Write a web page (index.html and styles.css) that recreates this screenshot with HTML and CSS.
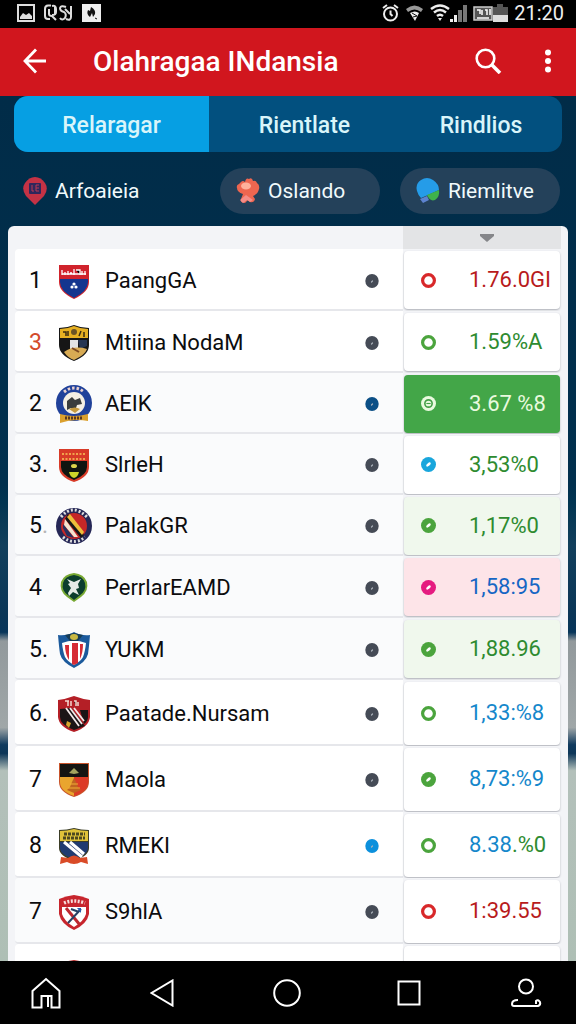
FILE: index.html
```
<!DOCTYPE html>
<html lang="id">
<head>
    <meta charset="UTF-8">
    <meta name="viewport" content="width=device-width, initial-scale=1.0">
    <title>Olahragaa INdansia</title>
    <link rel="stylesheet" href="styles.css">
</head>
<body>
    <!-- Shared status dots -->
    <svg width="0" height="0" class="defs" aria-hidden="true">
        <symbol id="dot" viewBox="0 0 14 14"><ellipse cx="7" cy="7" rx="6.700" ry="7" fill="currentColor"/><path d="M6.500 8l1-1" stroke="#aab1ba" stroke-width="1.200" stroke-linecap="round"/></symbol>
        <symbol id="ring" viewBox="0 0 14 14"><circle cx="7" cy="7" r="5.500" fill="#fff" stroke="currentColor" stroke-width="3"/></symbol>
        <symbol id="disc" viewBox="0 0 14 14"><circle cx="7" cy="7" r="7" fill="currentColor"/><ellipse cx="7" cy="7" rx="2.600" ry="1.300" fill="#fff" transform="rotate(-40 7 7)"/></symbol>
        <symbol id="target" viewBox="0 0 14 14"><circle cx="7" cy="7" r="7" fill="currentColor"/><circle cx="7" cy="7" r="3.400" fill="none" stroke="#43a047" stroke-width="1.500"/><path d="M5 7h4" stroke="#43a047"/></symbol>
    </svg>

    <div class="status-bar">
        <div class="status-group">
            <svg width="18" height="18" viewBox="0 0 18 18"><rect x="1" y="1" width="16" height="16" fill="none" stroke="#ddd" stroke-width="2"/><path d="M3 15v-2l3-4 3 2 3-2 3 3v3z" fill="#ddd"/></svg>
            <svg width="29" height="18" viewBox="0 0 29 18" fill="none" stroke="#ddd" stroke-width="2"><path d="M7 1.500H4Q1 1.500 1 5v7q0 3 3 3h2M11 2v8M5 5v5q0 2 3 2l4 4M8 2q4-1 4 3v3q0 3-4 3M22 3q-5-2-6 1 0 3 4 4 3 2 1 6-3 3-5 0M27 2v11q0 4-5 2M21 5l5 5"/></svg>
            <svg width="19" height="18" viewBox="0 0 19 18"><path fill="#eee" d="M0 0h19v18H0z"/><path d="M9 3q5 3 4 7l-2 3-1-4-2 4q-4-3-2-7l2 1z" fill="#111"/><path d="M13 14l2 1" stroke="#111"/></svg>
        </div>
        <div class="status-group right">
            <svg width="17" height="18" viewBox="0 0 17 18" fill="none" stroke="#eee" stroke-width="2"><circle cx="8.500" cy="10" r="6.500"/><path d="M8.500 6.500V10l2 2M1 4l4-3M16 4l-4-3"/></svg>
            <svg width="19" height="18" viewBox="0 0 19 18"><path d="M1 5q8.500-7 17 0l-2 3q-6.500-5-13 0z" fill="#999"/><path d="M5 9q5-3 9 0l-4 8z" fill="#eee"/><path d="M7 9l5 3-4 1" stroke="#111" fill="none"/></svg>
            <svg width="20" height="18" viewBox="0 0 20 18" fill="none" stroke="#eee" stroke-width="2.500"><path d="M1 5q9-7 18 0M4 8.500q6-5 12 0M7 12q3-2.500 6 0"/><path d="M8 14h4l-2 3z" fill="#eee" stroke="none"/></svg>
            <svg class="signal" width="17" height="18" viewBox="0 0 17 18"><path d="M0 15h3v3H0zM4 11h3v7H4z" fill="#eee"/><path d="M8 6h4v12H8zM13 1h4v17h-4z" fill="#777"/></svg>
            <svg width="35" height="18" viewBox="0 0 35 18"><rect x="1" y="3" width="18" height="13" fill="#555" stroke="#ccc" stroke-width="1.500"/><path d="M4 6h3v4M9 6v5M12 6h2v5M17 5v6M4 14h12" stroke="#fff" stroke-width="1.500" fill="none"/><path d="M20 3h4V0h6v3h5v8H20z" fill="#555"/><path d="M20 11h15v7H20z" fill="#ddd"/></svg>
            <span class="clock">21:20</span>
        </div>
    </div>

    <header class="app-bar">
        <button class="icon-btn" aria-label="Kembali"><svg width="24" height="26" viewBox="0 0 24 26" fill="none" stroke="#fff" stroke-width="2.800"><path d="M13 1.500L2 13l11 11.500M2 13h21"/></svg></button>
        <h1>Olahragaa INdansia</h1>
        <button class="icon-btn" aria-label="Cari"><svg width="27" height="26" viewBox="0 0 27 26" fill="none" stroke="#fff"><circle cx="10.500" cy="10.500" r="8.800" stroke-width="2.600"/><path d="M17 17l8 8" stroke-width="3.600"/></svg></button>
        <button class="icon-btn" aria-label="Menu"><svg width="8" height="24" viewBox="0 0 8 24" fill="#fff"><circle cx="4" cy="3.500" r="3"/><circle cx="4" cy="12" r="3"/><circle cx="4" cy="20.500" r="3"/></svg></button>
    </header>

    <main class="content">
        <nav class="tabs">
            <button class="tab active">Relaragar</button>
            <button class="tab">Rientlate</button>
            <button class="tab">Rindlios</button>
        </nav>

        <div class="chips">
            <button class="chip plain">
                <svg width="24" height="28" viewBox="0 0 24 28"><path d="M12 28L3 19Q-2 12 2 6q4-6 10-6t10 6q4 6-1 13z" fill="#c43245"/><rect x="6" y="6" width="12" height="11" rx="1" fill="#30275c"/><path d="M9 8v6h2M16 8h-3v6h3M13 11h3" stroke="#b93a55" fill="none"/></svg>
                Arfoaieia
            </button>
            <button class="chip">
                <svg width="24" height="26" viewBox="0 0 24 26"><path d="M5 4q2-2 4 0 1-5 4-3 3-2 4 2 3-1 4 2 3 2 2 6-1 5-6 7l2 3q-1 4-5 3l-2-2-3 3q-5 0-4-4l2-5Q1 14 1 10q-1-3 2-4z" fill="#ee6650"/><ellipse cx="10" cy="8" rx="5" ry="3.500" fill="#ffb19b"/><path d="M4 22l6-5 7 5-3 2-3-2-4 3z" fill="#f58d88"/></svg>
                Oslando
            </button>
            <button class="chip">
                <svg width="24" height="26" viewBox="0 0 24 26"><path d="M1 13Q-1 6 5 2q6-4 12 0 6 4 6 10l-11 5-7 3q-3-3-4-7z" fill="#259ce8"/><path d="M11 17l12-5q1 7-4 10-5 2-8-5z" fill="#3fb24b"/><path d="M4 21l7-3 2 4-6 3z" fill="#5d83cf"/></svg>
                Riemlitve
            </button>
        </div>

        <section class="card">
            <div class="card-head"><button class="sort" aria-label="Urutkan"><svg width="14" height="8" viewBox="0 0 14 8"><path d="M0 0h14v2L7 8 0 2z" fill="#85868a"/></svg></button></div>
            <table class="standings">
                <tbody>
                    <tr>
                        <td class="rank">1</td>
                        <td class="crest"><svg width="36" height="38" viewBox="0 0 36 38"><path d="M3 3h30v17q0 10-15 17Q3 30 3 20z" fill="#d0232c"/><path d="M4 17h28v3q0 9-14 16Q4 29 4 20z" fill="#14368f"/><path d="M6 8v5M9 10v3M12 9v4M14 11h2M18 7v6M20 8h4v5M26 9v4M29 9v4M6 12h24" stroke="#fff" stroke-width="1.300"/><circle cx="18" cy="22" r="1.600" fill="#fff"/><circle cx="16" cy="25" r="1.600" fill="#fff"/><circle cx="20" cy="25" r="1.600" fill="#fff"/></svg></td>
                        <td class="team">PaangGA</td>
                        <td class="mark"><svg width="14" height="14"><use href="#dot"/></svg></td>
                        <td class="score"><div class="cell red"><svg width="15" height="15"><use href="#ring"/></svg><span>1.76.0GI</span></div></td>
                    </tr>
                    <tr>
                        <td class="rank hot">3</td>
                        <td class="crest"><svg width="36" height="38" viewBox="0 0 36 38"><path d="M18 1q7 3 15 3v17q0 10-15 16Q3 31 3 21V4q8 0 15-3z" fill="#161616"/><path d="M18 2q7 3 14 3v9H4V5q7 0 14-3z" fill="#e6b022"/><path d="M7 8h3v4M12 7v5M25 7l-2 5M28 8v5" stroke="#382a10" stroke-width="1.500" fill="none"/><circle cx="18" cy="8" r="3" fill="#6a5325"/><path d="M14 16h8v9h-8z" fill="#e3e3e3"/><path d="M22 16h9v6l-7 3z" fill="#263552"/><path d="M8 28q10-7 23-3-2 6-13 11-6-2-10-8z" fill="#d7aa54"/><path d="M16 24l7 4" stroke="#7b4822" stroke-width="2"/></svg></td>
                        <td class="team">Mtiina NodaM</td>
                        <td class="mark"><svg width="14" height="14"><use href="#dot"/></svg></td>
                        <td class="score"><div class="cell green"><svg width="15" height="15"><use href="#ring"/></svg><span>1.59%A</span></div></td>
                    </tr>
                    <tr class="compact alt">
                        <td class="rank">2</td>
                        <td class="crest"><svg width="36" height="38" viewBox="0 0 36 38"><circle cx="18" cy="18" r="18" fill="#20419a"/><circle cx="18" cy="18" r="11" fill="#f4efe4"/><path d="M8 7q10-8 20 0" stroke="#e8d0cf" stroke-width="3" stroke-dasharray="2.500 2" fill="none"/><path d="M11 16l5-4 3 3 5-2 2 6-5 1-2 6-4-3-4 2z" fill="#3a3d3d"/><path d="M13 24q6-3 11 0l-5 4z" fill="#c69a3e"/><path d="M4 29q14 4 28 0v7q-14-3-28 2z" fill="#dba02d"/><path d="M9 33h18" stroke="#5a3920" stroke-width="3" stroke-dasharray="2 1"/></svg></td>
                        <td class="team">AEIK</td>
                        <td class="mark navy"><svg width="14" height="14"><use href="#dot"/></svg></td>
                        <td class="score"><div class="cell solid"><svg width="15" height="15"><use href="#target"/></svg><span>3.67 %8</span></div></td>
                    </tr>
                    <tr class="compact alt">
                        <td class="rank">3.</td>
                        <td class="crest"><svg width="36" height="38" viewBox="0 0 36 38"><path d="M3 3h30v18q0 10-15 15Q3 31 3 21z" fill="#d83b28"/><path d="M5 15h26v6q0 8-13 13Q5 29 5 21z" fill="#101510"/><path d="M6 8h24M6 13h24" stroke="#f1a34c" stroke-width="2" stroke-dasharray="2 1.500"/><ellipse cx="18" cy="20" rx="3" ry="2" fill="#ddd44b"/><path d="M13 26h10q-1 5-5 6-4-1-5-6z" fill="#cdd529"/></svg></td>
                        <td class="team">SlrleH</td>
                        <td class="mark"><svg width="14" height="14"><use href="#dot"/></svg></td>
                        <td class="score"><div class="cell green sky-dot"><svg width="15" height="15"><use href="#disc"/></svg><span>3,53%0</span></div></td>
                    </tr>
                    <tr class="compact alt">
                        <td class="rank">5<span class="faint">.</span></td>
                        <td class="crest"><svg width="36" height="38" viewBox="0 0 36 38"><circle cx="18" cy="19" r="18" fill="#252756"/><path d="M5 10q12-14 26 0M7 30q11 9 22 0" fill="none" stroke="#ddd" stroke-width="3" stroke-dasharray="2 2"/><circle cx="18" cy="19" r="13" fill="#c52727"/><path d="M12 7l16 21-3 3L9 12z" fill="#171717"/><path d="M14 7l14 18-2 3L11 10z" fill="#edbd3a"/><path d="M9 12l13 18h-4L8 18z" fill="#f4e5d0"/><path d="M7 17l11 14-7-2-4-8z" fill="#26315f"/></svg></td>
                        <td class="team">PalakGR</td>
                        <td class="mark"><svg width="14" height="14"><use href="#dot"/></svg></td>
                        <td class="score"><div class="cell green mint"><svg width="15" height="15"><use href="#disc"/></svg><span>1,17%0</span></div></td>
                    </tr>
                    <tr class="alt">
                        <td class="rank">4</td>
                        <td class="crest"><svg width="36" height="38" viewBox="0 0 36 38"><path d="M18 4q10 1 13 9 2 9-6 15l-7 5-7-5Q3 22 5 13q3-8 13-9z" fill="#77a832"/><path d="M18 6q9 1 11 8 2 8-6 13l-5 4-5-4Q5 22 7 14q2-7 11-8z" fill="#0b3e2d"/><path d="M11 10l7 3 7-3-3 5 1 4-3 1 3 6-6-3-4 4-1-3 3-5-3-4 2-1z" fill="#e4ebe6"/></svg></td>
                        <td class="team">PerrlarEAMD</td>
                        <td class="mark"><svg width="14" height="14"><use href="#dot"/></svg></td>
                        <td class="score"><div class="cell blue pink"><svg width="15" height="15"><use href="#disc"/></svg><span>1,58:95</span></div></td>
                    </tr>
                    <tr class="alt">
                        <td class="rank">5.</td>
                        <td class="crest"><svg width="36" height="38" viewBox="0 0 36 38"><path d="M18 1q7 4 16 3-1 12-2 19-2 8-14 14Q6 31 4 23 3 16 2 4q9 1 16-3z" fill="#1b5a9c"/><path d="M6 12q12-5 24 0-1 9-3 14-2 4-9 8-7-4-9-8-2-5-3-14z" fill="#fff"/><path d="M9 14h4v15q-4-6-4-15zM16 12h6v20l-4 2-2-1zM24 13h3q0 9-3 15z" fill="#d52c35"/><path d="M9 4l9-2 9 2-5 6h-8z" fill="#173c55"/><ellipse cx="18" cy="6" rx="4" ry="3" fill="#c8b842"/></svg></td>
                        <td class="team">YUKM</td>
                        <td class="mark"><svg width="14" height="14"><use href="#dot"/></svg></td>
                        <td class="score"><div class="cell green mint"><svg width="15" height="15"><use href="#disc"/></svg><span>1,88.96</span></div></td>
                    </tr>
                    <tr class="tall">
                        <td class="rank">6.</td>
                        <td class="crest"><svg width="36" height="38" viewBox="0 0 36 38"><path d="M18 1q8 3 16 4v17q-1 10-16 15Q3 32 2 22V5q8-1 16-4z" fill="#b41f26"/><path d="M4 14l11-1 14 18-11 4Q4 30 4 22z" fill="#1b1516"/><path d="M24 15h8v7q0 4-4 7z" fill="#1b1516"/><path d="M10 13l13 18M14 13l12 16M18 13l10 13" stroke="#f3e9e9" stroke-width="1.800"/><path d="M9 6h4M12 6v5M15 6v5M18 6h2v5M22 7v4" stroke="#f5d8d0" stroke-width="1.500"/><path d="M11 26l4 2-2 5-3-3z" fill="#d8a52d"/></svg></td>
                        <td class="team">Paatade.Nursam</td>
                        <td class="mark"><svg width="14" height="14"><use href="#dot"/></svg></td>
                        <td class="score"><div class="cell sky green-dot"><svg width="15" height="15"><use href="#ring"/></svg><span>1,33:%8</span></div></td>
                    </tr>
                    <tr class="tall">
                        <td class="rank">7</td>
                        <td class="crest"><svg width="36" height="38" viewBox="0 0 36 38"><path d="M3 2h30v19q0 10-15 15Q3 31 3 21z" fill="#c8542b"/><path d="M4 3h28v13H4z" fill="#161512"/><path d="M4 16h14v19Q4 30 4 21z" fill="#e9a52e"/><path d="M18 16h14v5q0 9-14 14z" fill="#dc3b26"/><path d="M13 12l3-3 2-2 2 2 3 3-5 1z" fill="#a4a35e"/><path d="M14 26l2-5 2-4 2 4 2 5 3 3-7 3-7-3z" fill="#bf6420"/><path d="M14 23h8M12 27h12" stroke="#f0ac35"/></svg></td>
                        <td class="team">Maola</td>
                        <td class="mark"><svg width="14" height="14"><use href="#dot"/></svg></td>
                        <td class="score"><div class="cell sky green-dot"><svg width="15" height="15"><use href="#disc"/></svg><span>8,73:%9</span></div></td>
                    </tr>
                    <tr class="tall">
                        <td class="rank">8</td>
                        <td class="crest"><svg width="36" height="38" viewBox="0 0 36 38"><path d="M18 1q7 2 15 2v18q0 8-15 13Q3 29 3 21V3q8 0 15-2z" fill="#3b3d26"/><path d="M18 2q7 2 14 2v10H4V4q7 0 14-2z" fill="#dfc239"/><path d="M8 7h21M7 11h22" stroke="#4d4820" stroke-width="3" stroke-dasharray="3 1"/><path d="M4 15h28v7q-1 6-14 10Q5 28 4 22z" fill="#203b70"/><path d="M8 15l18 15M14 15l14 12" stroke="#fff" stroke-width="3"/><path d="M5 30l7 1q6-5 12 0l7-1 1 7-7-2q-7 4-14 0l-7 2z" fill="#d94b27"/></svg></td>
                        <td class="team">RMEKI</td>
                        <td class="mark azure"><svg width="14" height="14"><use href="#dot"/></svg></td>
                        <td class="score"><div class="cell sky green-dot"><svg width="15" height="15"><use href="#ring"/></svg><span>8.38<span class="tail">.%0</span></span></div></td>
                    </tr>
                    <tr class="tall alt">
                        <td class="rank">7</td>
                        <td class="crest"><svg width="36" height="38" viewBox="0 0 36 38"><path d="M18 2q8 1 15 4v15q-2 10-15 16Q5 31 3 21V6q7-3 15-4z" fill="#c7252d"/><path d="M6 14h24v7q-2 7-12 13Q8 28 6 21z" fill="#fff"/><path d="M8 10q10-4 21 0" stroke="#f6dcda" stroke-width="3.500" stroke-dasharray="2 1.500" fill="none"/><path d="M10 15l14 17" stroke="#bd2830" stroke-width="3"/><path d="M25 16L12 30M15 16l8 3" stroke="#284265" stroke-width="2"/><path d="M21 15h4v5z" fill="#275cac"/></svg></td>
                        <td class="team">S9hlA</td>
                        <td class="mark"><svg width="14" height="14"><use href="#dot"/></svg></td>
                        <td class="score"><div class="cell red"><svg width="15" height="15"><use href="#ring"/></svg><span>1:39.55</span></div></td>
                    </tr>
                    <tr class="tall">
                        <td class="rank"></td>
                        <td class="crest"><svg width="36" height="38" viewBox="0 0 36 38"><path d="M18 1q8 1 15 4v16q-2 10-15 16Q5 31 3 21V5q7-3 15-4z" fill="#b52a2a"/><path d="M10 4h8" stroke="#d8b75a" stroke-width="2"/></svg></td>
                        <td class="team"></td>
                        <td class="mark"></td>
                        <td class="score"><div class="cell"></div></td>
                    </tr>
                </tbody>
            </table>
        </section>
    </main>

    <footer class="nav-bar">
        <button class="icon-btn" aria-label="Beranda"><svg width="30" height="32" viewBox="0 0 30 32"><path d="M1.500 30.500V14L15 2l13.500 12v16.500h-8V19h-10v11.500zM17 20v10"/></svg></button>
        <button class="icon-btn" aria-label="Kembali"><svg width="24" height="28" viewBox="0 0 24 28"><path d="M22.500 1.500v25L1.500 14z"/></svg></button>
        <button class="icon-btn" aria-label="Tengah"><svg width="28" height="28" viewBox="0 0 28 28"><circle cx="14" cy="14" r="12.800"/></svg></button>
        <button class="icon-btn" aria-label="Terbaru"><svg width="24" height="26" viewBox="0 0 24 26"><rect x="1.500" y="1.500" width="21" height="23"/></svg></button>
        <button class="icon-btn" aria-label="Profil"><svg width="32" height="30" viewBox="0 0 32 30"><circle cx="16" cy="8.500" r="7"/><path d="M8 22q-6 0-6 4 0 2 2 2h24q3-1 2-4-2-3-4-1v3"/></svg></button>
    </footer>
</body>
</html>
```
FILE: styles.css
```
* {
    box-sizing: border-box;
}
body {
    margin: 0;
    height: 100vh;
    display: flex;
    flex-direction: column;
    font-family: Roboto, "Liberation Sans", sans-serif;
    background-color: #000;
    color: #0c0c0e;
}
button {
    border: none;
    padding: 0;
    background: none;
    font-family: inherit;
    color: inherit;
    cursor: pointer;
}
svg {
    display: block;
    flex: none;
}
h1 {
    margin: 0;
    flex: 1;
    font-size: 28px;
    font-weight: 500;
    color: #fff;
}
.defs {
    position: absolute;
}

/* Status bar */
.status-bar {
    display: flex;
    flex: none;
    justify-content: space-between;
    align-items: center;
    height: 28px;
    padding: 0 12px 2px 17px;
    background-color: #000;
}
.status-group {
    display: flex;
    align-items: center;
    gap: 9px;
}
.status-group.right {
    gap: 6px;
}
.signal {
    margin-left: -6px;
}
.clock {
    font-size: 20px;
    line-height: 24px;
    color: #eee;
}

/* App bar */
.app-bar {
    display: flex;
    flex: none;
    align-items: center;
    height: 68px;
    padding: 0 24px 2px 23px;
    background-color: #d1161e;
}
.app-bar h1 {
    padding-left: 46px;
}
.app-bar .icon-btn:last-child {
    margin-left: 42px;
}
.icon-btn {
    display: flex;
    align-items: center;
    justify-content: center;
}

.content {
    flex: 1;
    min-height: 0;
    padding: 0 8px;
    overflow: hidden auto;
    scrollbar-width: none;
    background: linear-gradient(#012c48 0, #01304e 45%, #023552 47%, #123f5c 52%, #0a3657 60%, #07355a 62%, #92999c 63%, #a0a7a8 73%, #103a5e 75%, #0d3658 76%, #b3c0ba 78%, #aebfb5 100%);
}

/* Tabs */
.tabs {
    display: grid;
    grid-template-columns: 195fr 191fr 162fr;
    height: 56px;
    margin: 0 6px 16px;
    border-radius: 14px;
    background-color: #02507f;
    overflow: hidden;
}
.tab {
    padding-top: 2px;
    font-size: 23px;
    font-weight: 500;
    color: #d9f5fa;
}
.tab.active {
    background-color: #069fe3;
}

/* Filter chips */
.chips {
    display: flex;
    gap: 20px;
    height: 46px;
    margin: 0 8px 12px 0;
}
.chip {
    display: flex;
    align-items: center;
    gap: 8px;
    width: 160px;
    padding-left: 16px;
    border-radius: 23px;
    background-color: #24415a;
    font-size: 21px;
    color: #f1fafc;
}
.chip.plain {
    flex: 1;
    padding-left: 15px;
    background-color: transparent;
}

/* Standings */
.card {
    padding: 0 7px;
    border-radius: 6px 6px 0 0;
    background-color: #f3f4f7;
}
.card-head {
    display: flex;
    justify-content: flex-end;
    height: 23px;
}
.sort {
    display: flex;
    align-items: center;
    justify-content: center;
    width: 158px;
    padding-left: 10px;
    background-color: #e3e4e6;
}
.standings {
    width: 100%;
    table-layout: fixed;
    border-spacing: 0;
    font-size: 22px;
    line-height: 28px;
}
.standings tr {
    height: 62px;
}
.standings .compact {
    height: 61px;
}
.standings .tall {
    height: 66px;
}
.standings td {
    padding: 3px 0 0;
    border-bottom: 2px solid #e6e7eb;
    background-color: #fff;
}
.standings .alt td {
    background-color: #fafbfc;
}
.standings .rank {
    width: 41px;
    padding-left: 14px;
    border-radius: 4px 0 0 4px;
    font-size: 23px;
}
.rank.hot {
    color: #d34b2b;
}
.faint {
    color: #b5b5b5;
}
.standings .crest {
    width: 49px;
}
.standings .mark {
    width: 38px;
    color: #454b56;
}
.standings .navy {
    color: #0b4f86;
}
.standings .azure {
    color: #0c90dc;
}
.standings .score {
    width: 158px;
    padding-top: 0;
    border-bottom: none;
}
.standings td.score,
.standings .alt td.score {
    background-color: #f3f4f7;
}
.cell {
    display: flex;
    align-items: center;
    gap: 33px;
    height: 58px;
    margin: 0 1px;
    padding-left: 17px;
    border-radius: 4px;
    background-color: #fff;
    box-shadow: 0 1px 2px rgba(40, 45, 60, 0.35);
}
.tall .cell {
    height: 63px;
}
.red {
    color: #b81b1c;
}
.red svg {
    color: #d8282a;
}
.green {
    color: #2e8b30;
}
.green svg,
.green-dot svg {
    color: #4ba43d;
}
.blue {
    color: #1666c4;
}
.sky {
    color: #1587cb;
}
.tail {
    color: #2e8b30;
}
.sky-dot svg {
    color: #19a6dc;
}
.mint {
    background-color: #f0f8ed;
}
.pink {
    background-color: #fde4e8;
}
.pink svg {
    color: #e51b80;
}
.solid {
    background-color: #43a648;
    color: #e9fadf;
}

/* System navigation */
.nav-bar {
    display: grid;
    flex: none;
    grid-template-columns: 92fr 140fr 110fr 134fr 100fr;
    height: 63px;
    background-color: #000;
}
.nav-bar svg {
    fill: none;
    stroke: #fff;
    stroke-width: 2;
}
```
